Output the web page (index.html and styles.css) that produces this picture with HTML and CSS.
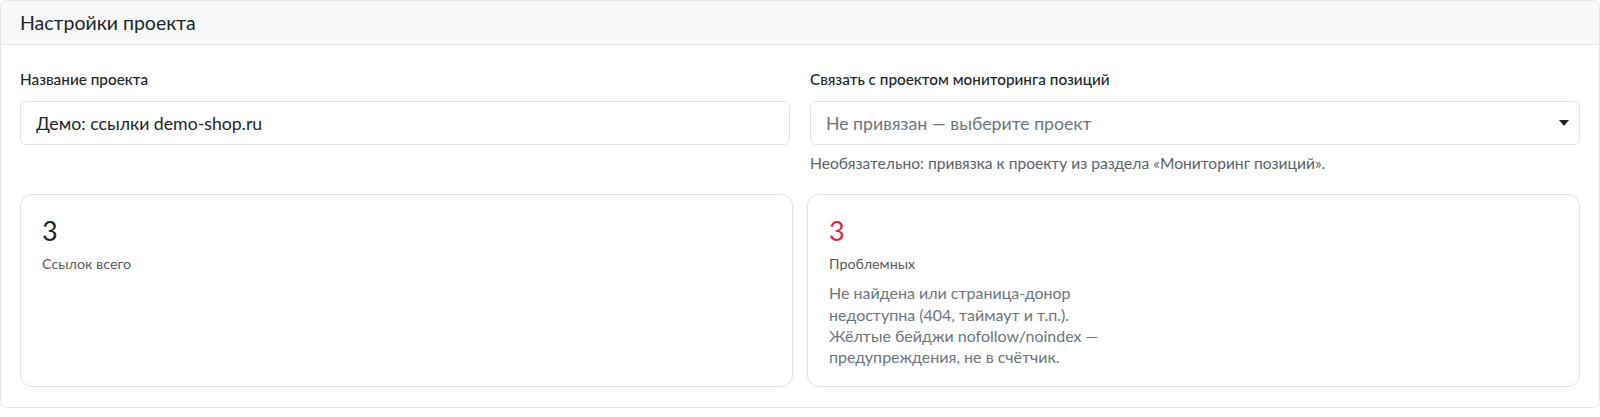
FILE: index.html
```html
<!DOCTYPE html>
<html lang="ru">
<head>
    <meta charset="UTF-8">
    <meta name="viewport" content="width=device-width, initial-scale=1.0">
    <title>Настройки проекта</title>
    <link rel="stylesheet" href="styles.css">
</head>
<body>

<div class="card">
    <div class="card-header">Настройки проекта</div>
    <div class="card-body">
        <div class="form-row">
            <div class="field">
                <label class="field-label" for="project-name">Название проекта</label>
                <input class="field-input" id="project-name" type="text" value="Демо: ссылки demo-shop.ru">
            </div>
            <div class="field">
                <label class="field-label" for="monitor-link">Связать с проектом мониторинга позиций</label>
                <div class="select-wrap">
                    <select class="field-select" id="monitor-link">
                        <option>Не привязан — выберите проект</option>
                    </select>
                </div>
                <div class="field-help">Необязательно: привязка к проекту из раздела «Мониторинг позиций».</div>
            </div>
        </div>

        <div class="stats-row">
            <div class="stat-card">
                <div class="stat-value">3</div>
                <div class="stat-label">Ссылок всего</div>
            </div>
            <div class="stat-card">
                <div class="stat-value danger">3</div>
                <div class="stat-label">Проблемных</div>
                <div class="stat-note">Не найдена или страница-донор недоступна (404, таймаут и т.п.). Жёлтые бейджи nofollow/noindex — предупреждения, не в счётчик.</div>
            </div>
        </div>
    </div>
</div>

</body>
</html>
```

FILE: styles.css
```css
body {
    margin: 0;
    background-color: #ffffff;
    color: #212529;
    font-family: "Lato", "Noto Sans", sans-serif;
}

.card {
    border: 1px solid #e3e6ea;
    border-radius: 7px;
    height: 408px;
    box-sizing: border-box;
    overflow: hidden;
}

.card-header {
    background-color: #f7f8fa;
    border-bottom: 1px solid #e3e6ea;
    height: 43px;
    padding: 0 19px;
    display: flex;
    align-items: center;
    font-size: 19.5px;
}

.card-body {
    padding: 20px 19px;
}

.form-row {
    display: grid;
    grid-template-columns: 1fr 1fr;
    gap: 20px;
}

.field-label {
    display: block;
    font-size: 15.3px;
    font-weight: 500;
    margin-top: 5px;
    margin-bottom: 13px;
}

.field-input,
.field-select {
    display: block;
    width: 100%;
    height: 44px;
    box-sizing: border-box;
    border: 1px solid #dee2e6;
    border-radius: 6px;
    padding: 0 15px;
    font-family: inherit;
    font-size: 17.7px;
    color: #212529;
    background-color: #ffffff;
}

.select-wrap {
    position: relative;
}

.field-select {
    appearance: none;
    color: #6c757d;
}

/* caret over the right end of the select */
.select-wrap::after {
    content: "";
    position: absolute;
    right: 11px;
    top: 19px;
    border-left: 5px solid transparent;
    border-right: 5px solid transparent;
    border-top: 6px solid #212529;
}

.field-help {
    margin-top: 9px;
    font-size: 15.6px;
    color: #5c636a;
}

.stats-row {
    display: grid;
    grid-template-columns: 1fr 1fr;
    gap: 14px;
    margin-top: 22px;
}

.stat-card {
    border: 1px solid #dee2e6;
    border-radius: 12px;
    height: 193px;
    box-sizing: border-box;
    padding: 20px 21px;
}

.stat-value {
    font-size: 27px;
    line-height: 1.2;
}

.stat-value.danger {
    color: #dc2b3b;
}

.stat-label {
    margin-top: 8px;
    font-size: 14.3px;
    color: #555b61;
}

.stat-note {
    margin-top: 10px;
    max-width: 272px;
    font-size: 16px;
    line-height: 21.3px;
    color: #6c757d;
}
```
